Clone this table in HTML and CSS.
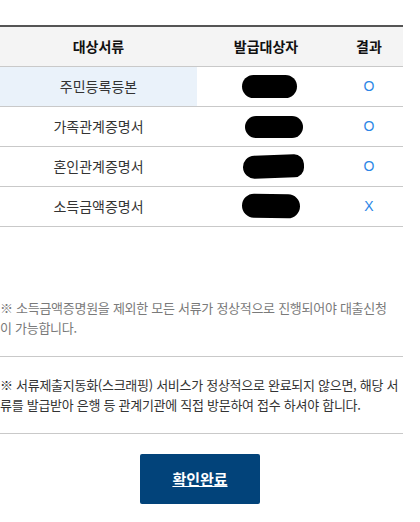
FILE: index.html
```html
<!DOCTYPE html>
<html lang="ko">
<head>
  <meta charset="UTF-8">
  <meta name="viewport" content="width=device-width, initial-scale=1.0">
  <title>서류제출 결과</title>
  <link rel="stylesheet" href="styles.css">
</head>
<body>
<div class="container">
  <table class="result-table">
    <thead>
      <tr>
        <th class="col-doc">대상서류</th>
        <th class="col-target">발급대상자</th>
        <th class="col-result">결과</th>
      </tr>
    </thead>
    <tbody>
      <tr>
        <td class="active">주민등록등본</td>
        <td><span class="mask m1"></span></td>
        <td class="mark">O</td>
      </tr>
      <tr>
        <td>가족관계증명서</td>
        <td><span class="mask m2"></span></td>
        <td class="mark">O</td>
      </tr>
      <tr>
        <td>혼인관계증명서</td>
        <td><span class="mask m3"></span></td>
        <td class="mark">O</td>
      </tr>
      <tr>
        <td>소득금액증명서</td>
        <td><span class="mask m4"></span></td>
        <td class="mark">X</td>
      </tr>
    </tbody>
  </table>

  <div class="notice">
    <p class="note muted">※ 소득금액증명원을 제외한 모든 서류가 정상적으로 진행되어야 대출신청이 가능합니다.</p>
    <p class="note">※ 서류제출지동화(스크래핑) 서비스가 정상적으로 완료되지 않으면, 해당 서류를 발급받아 은행 등 관계기관에 직접 방문하여 접수 하셔야 합니다.</p>
  </div>

  <div class="actions">
    <a href="#" class="btn-confirm">확인완료</a>
  </div>
</div>
</body>
</html>
```

FILE: styles.css
```css
:root {
  --text: #333333;
  --muted: #7a7a7a;
  --line: #c9c9c9;
  --head: #f4f4f4;
  --active: #eaf2fa;
  --mark: #2b86e6;
  --primary: #02437a;
}

* {
  margin: 0;
  padding: 0;
  box-sizing: border-box;
}

body {
  font-family: "Noto Sans CJK KR", "Noto Sans", sans-serif;
  color: var(--text);
  background: #fff;
}

.container {
  width: 403px;
  padding-top: 25px;
}

.result-table {
  width: 100%;
  border-collapse: collapse;
  border-top: 2px solid #555;
  font-size: 14px;
}

.result-table th {
  height: 40px;
  background: var(--head);
  color: #111;
  font-weight: 700;
  border-bottom: 1px solid var(--line);
}

.col-doc { width: 197px; }
.col-result { width: 68px; }

.result-table td {
  height: 40px;
  text-align: center;
  border-bottom: 1px solid var(--line);
}

.result-table td.active {
  background: var(--active);
}

.mark {
  color: var(--mark);
  font-family: "Liberation Sans", sans-serif;
  font-size: 14px;
}

/* redacted names */
.mask {
  display: inline-block;
  vertical-align: middle;
  width: 55px;
  height: 23px;
  background: #000;
  border-radius: 12px;
}

.m1 { transform: translateX(3px); }
.m2 { width: 58px; height: 22px; transform: translateX(8px); }
.m3 { width: 61px; height: 23px; border-radius: 14px 12px 12px 14px; transform: translateX(7px) rotate(-2deg); }
.m4 { width: 58px; height: 24px; transform: translateX(5px) rotate(1deg); }

.notice {
  margin-top: 53px;
}

.note {
  font-size: 13px;
  line-height: 20px;
  padding: 18px 0;
  border-bottom: 1px solid var(--line);
  word-break: break-all;
  letter-spacing: -0.28px;
}

.note.muted {
  color: var(--muted);
  padding-right: 8px;
}

.actions {
  display: flex;
  justify-content: center;
  padding-top: 20px;
  padding-right: 3px;
}

.btn-confirm {
  display: flex;
  align-items: center;
  justify-content: center;
  width: 120px;
  height: 50px;
  background: var(--primary);
  color: #fff;
  font-size: 15px;
  font-weight: 700;
  border-radius: 2px;
}
```
